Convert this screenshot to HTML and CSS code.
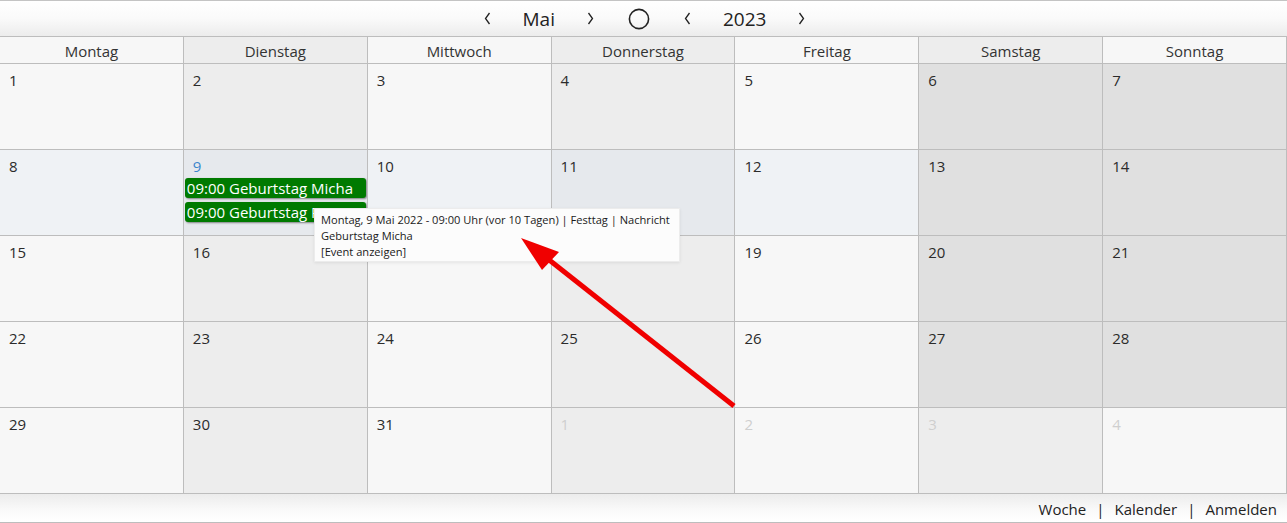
FILE: index.html
```html
<!DOCTYPE html>
<html lang="de">
<head>
<meta charset="utf-8">
<title>Kalender Mai 2023</title>
<link rel="stylesheet" href="styles.css">
</head>
<body>
<div class="page">
  <header class="topbar">
    <nav class="nav">
      <span class="chev"><svg width="7" height="13" viewBox="0 0 7 13"><polyline points="5.5,1 1.5,6.5 5.5,12" fill="none" stroke="#222" stroke-width="1.3"/></svg></span>
      <span class="navtext">Mai</span>
      <span class="chev"><svg width="7" height="13" viewBox="0 0 7 13"><polyline points="1.5,1 5.5,6.5 1.5,12" fill="none" stroke="#222" stroke-width="1.3"/></svg></span>
      <span class="today"><svg width="22" height="22" viewBox="0 0 22 22"><circle cx="11" cy="11" r="9.6" fill="none" stroke="#222" stroke-width="1.6"/></svg></span>
      <span class="chev"><svg width="7" height="13" viewBox="0 0 7 13"><polyline points="5.5,1 1.5,6.5 5.5,12" fill="none" stroke="#222" stroke-width="1.3"/></svg></span>
      <span class="navtext">2023</span>
      <span class="chev"><svg width="7" height="13" viewBox="0 0 7 13"><polyline points="1.5,1 5.5,6.5 1.5,12" fill="none" stroke="#222" stroke-width="1.3"/></svg></span>
    </nav>
  </header>

  <div class="cal">
    <div class="dh">Montag</div>
    <div class="dh alt">Dienstag</div>
    <div class="dh">Mittwoch</div>
    <div class="dh alt">Donnerstag</div>
    <div class="dh">Freitag</div>
    <div class="dh alt">Samstag</div>
    <div class="dh">Sonntag</div>

    <div class="cell"><span class="num">1</span></div>
    <div class="cell alt"><span class="num">2</span></div>
    <div class="cell"><span class="num">3</span></div>
    <div class="cell alt"><span class="num">4</span></div>
    <div class="cell"><span class="num">5</span></div>
    <div class="cell we"><span class="num">6</span></div>
    <div class="cell we"><span class="num">7</span></div>

    <div class="cell cur"><span class="num">8</span></div>
    <div class="cell cur alt"><span class="num today-num">9</span>
      <div class="events">
        <div class="ev">09:00 Geburtstag Micha</div>
        <div class="ev">09:00 Geburtstag Peter</div>
      </div>
    </div>
    <div class="cell cur"><span class="num">10</span></div>
    <div class="cell cur alt"><span class="num">11</span></div>
    <div class="cell cur"><span class="num">12</span></div>
    <div class="cell we"><span class="num">13</span></div>
    <div class="cell we"><span class="num">14</span></div>

    <div class="cell"><span class="num">15</span></div>
    <div class="cell alt"><span class="num">16</span></div>
    <div class="cell"><span class="num">17</span></div>
    <div class="cell alt"><span class="num">18</span></div>
    <div class="cell"><span class="num">19</span></div>
    <div class="cell we"><span class="num">20</span></div>
    <div class="cell we"><span class="num">21</span></div>

    <div class="cell"><span class="num">22</span></div>
    <div class="cell alt"><span class="num">23</span></div>
    <div class="cell"><span class="num">24</span></div>
    <div class="cell alt"><span class="num">25</span></div>
    <div class="cell"><span class="num">26</span></div>
    <div class="cell we"><span class="num">27</span></div>
    <div class="cell we"><span class="num">28</span></div>

    <div class="cell"><span class="num">29</span></div>
    <div class="cell alt"><span class="num">30</span></div>
    <div class="cell"><span class="num">31</span></div>
    <div class="cell alt other"><span class="num">1</span></div>
    <div class="cell other"><span class="num">2</span></div>
    <div class="cell alt other"><span class="num">3</span></div>
    <div class="cell other"><span class="num">4</span></div>
  </div>

  <footer class="foot">
    <span class="link">Woche</span><span class="sep">|</span><span class="link">Kalender</span><span class="sep">|</span><span class="link">Anmelden</span>
  </footer>

  <div class="tooltip">
    <div>Montag, 9 Mai 2022 - 09:00 Uhr (vor 10 Tagen) | Festtag | Nachricht</div>
    <div>Geburtstag Micha</div>
    <div>[Event anzeigen]</div>
  </div>

  <svg class="arrow" width="1287" height="523" viewBox="0 0 1287 523">
    <line x1="734" y1="406" x2="548" y2="259" stroke="#f00000" stroke-width="5"/>
    <polygon points="521,238 559,252 542,270" fill="#f00000"/>
  </svg>
</div>
</body>
</html>
```

FILE: styles.css
```css
* { box-sizing: border-box; }
html, body { margin: 0; padding: 0; }
body {
  font-family: "Open Sans", "Noto Sans", sans-serif;
  color: #2b2b2b;
  background: #f7f7f7;
  width: 1287px;
  height: 523px;
  overflow: hidden;
}
.page {
  position: relative;
  width: 1287px;
  height: 523px;
  display: flex;
  flex-direction: column;
}
.topbar {
  height: 37px;
  border-top: 1px solid #c4c4c4;
  border-bottom: 1px solid #bdbdbd;
  background: linear-gradient(#ffffff 0%, #fafafa 50%, #ececec 100%);
  display: flex;
  align-items: center;
  justify-content: center;
}
.nav {
  display: flex;
  align-items: center;
  gap: 32px;
  margin-left: 2px;
}
.chev { display: flex; align-items: center; }
.chev svg, .today svg { display: block; }
.navtext {
  font-size: 19px;
  line-height: 24px;
  color: #222;
}
.today { display: flex; margin: 0 2px; }

.cal {
  display: grid;
  grid-template-columns: repeat(7, 1fr);
  grid-template-rows: 27px repeat(5, 86px);
}
.dh {
  background: #f7f7f7;
  border-right: 1px solid #bdbdbd;
  border-bottom: 1px solid #bdbdbd;
  font-size: 15px;
  line-height: 26px;
  padding-top: 1px;
  text-align: center;
  color: #333;
}
.dh.alt { background: #ededed; }
.cell {
  background: #f7f7f7;
  border-right: 1px solid #bdbdbd;
  border-bottom: 1px solid #bdbdbd;
  padding-top: 6px;
  overflow: hidden;
}
.cell.alt { background: #ededed; }
.cell.cur { background: #eff2f5; }
.cell.cur.alt { background: #e6e9ed; }
.cell.we { background: #e0e0e0; }
.num {
  display: block;
  font-size: 15px;
  line-height: 20px;
  padding-left: 9px;
  color: #2b2b2b;
}
.num.today-num { color: #3a86cc; }
.cell.other .num { color: #cfcfcf; }

.events {
  display: flex;
  flex-direction: column;
  gap: 4px;
  margin: 2px 1px 0 1px;
}
.ev {
  background: #007a00;
  color: #ffffff;
  font-size: 15px;
  line-height: 21px;
  height: 20px;
  padding-left: 2px;
  border-radius: 3px;
  box-shadow: 1px 1px 2px rgba(0,0,0,0.45);
  white-space: nowrap;
  overflow: hidden;
}

.foot {
  flex: 1;
  border-bottom: 1px solid #bdbdbd;
  background: linear-gradient(#ececec 0%, #f9f9f9 55%, #ffffff 100%);
  display: flex;
  align-items: center;
  justify-content: flex-end;
  padding-right: 10px;
  padding-top: 2px;
  font-size: 15px;
  color: #222;
}
.sep { margin: 0 10px; }

.tooltip {
  position: absolute;
  left: 314px;
  top: 208px;
  width: 366px;
  height: 54px;
  background: #fcfcfc;
  border: 1px solid #ececec;
  box-shadow: 0 1px 3px rgba(0,0,0,0.08);
  padding: 3px 6px;
  font-size: 11.1px;
  line-height: 16px;
  color: #1a1a1a;
  white-space: nowrap;
}
.arrow {
  position: absolute;
  left: 0;
  top: 0;
  pointer-events: none;
}
```
